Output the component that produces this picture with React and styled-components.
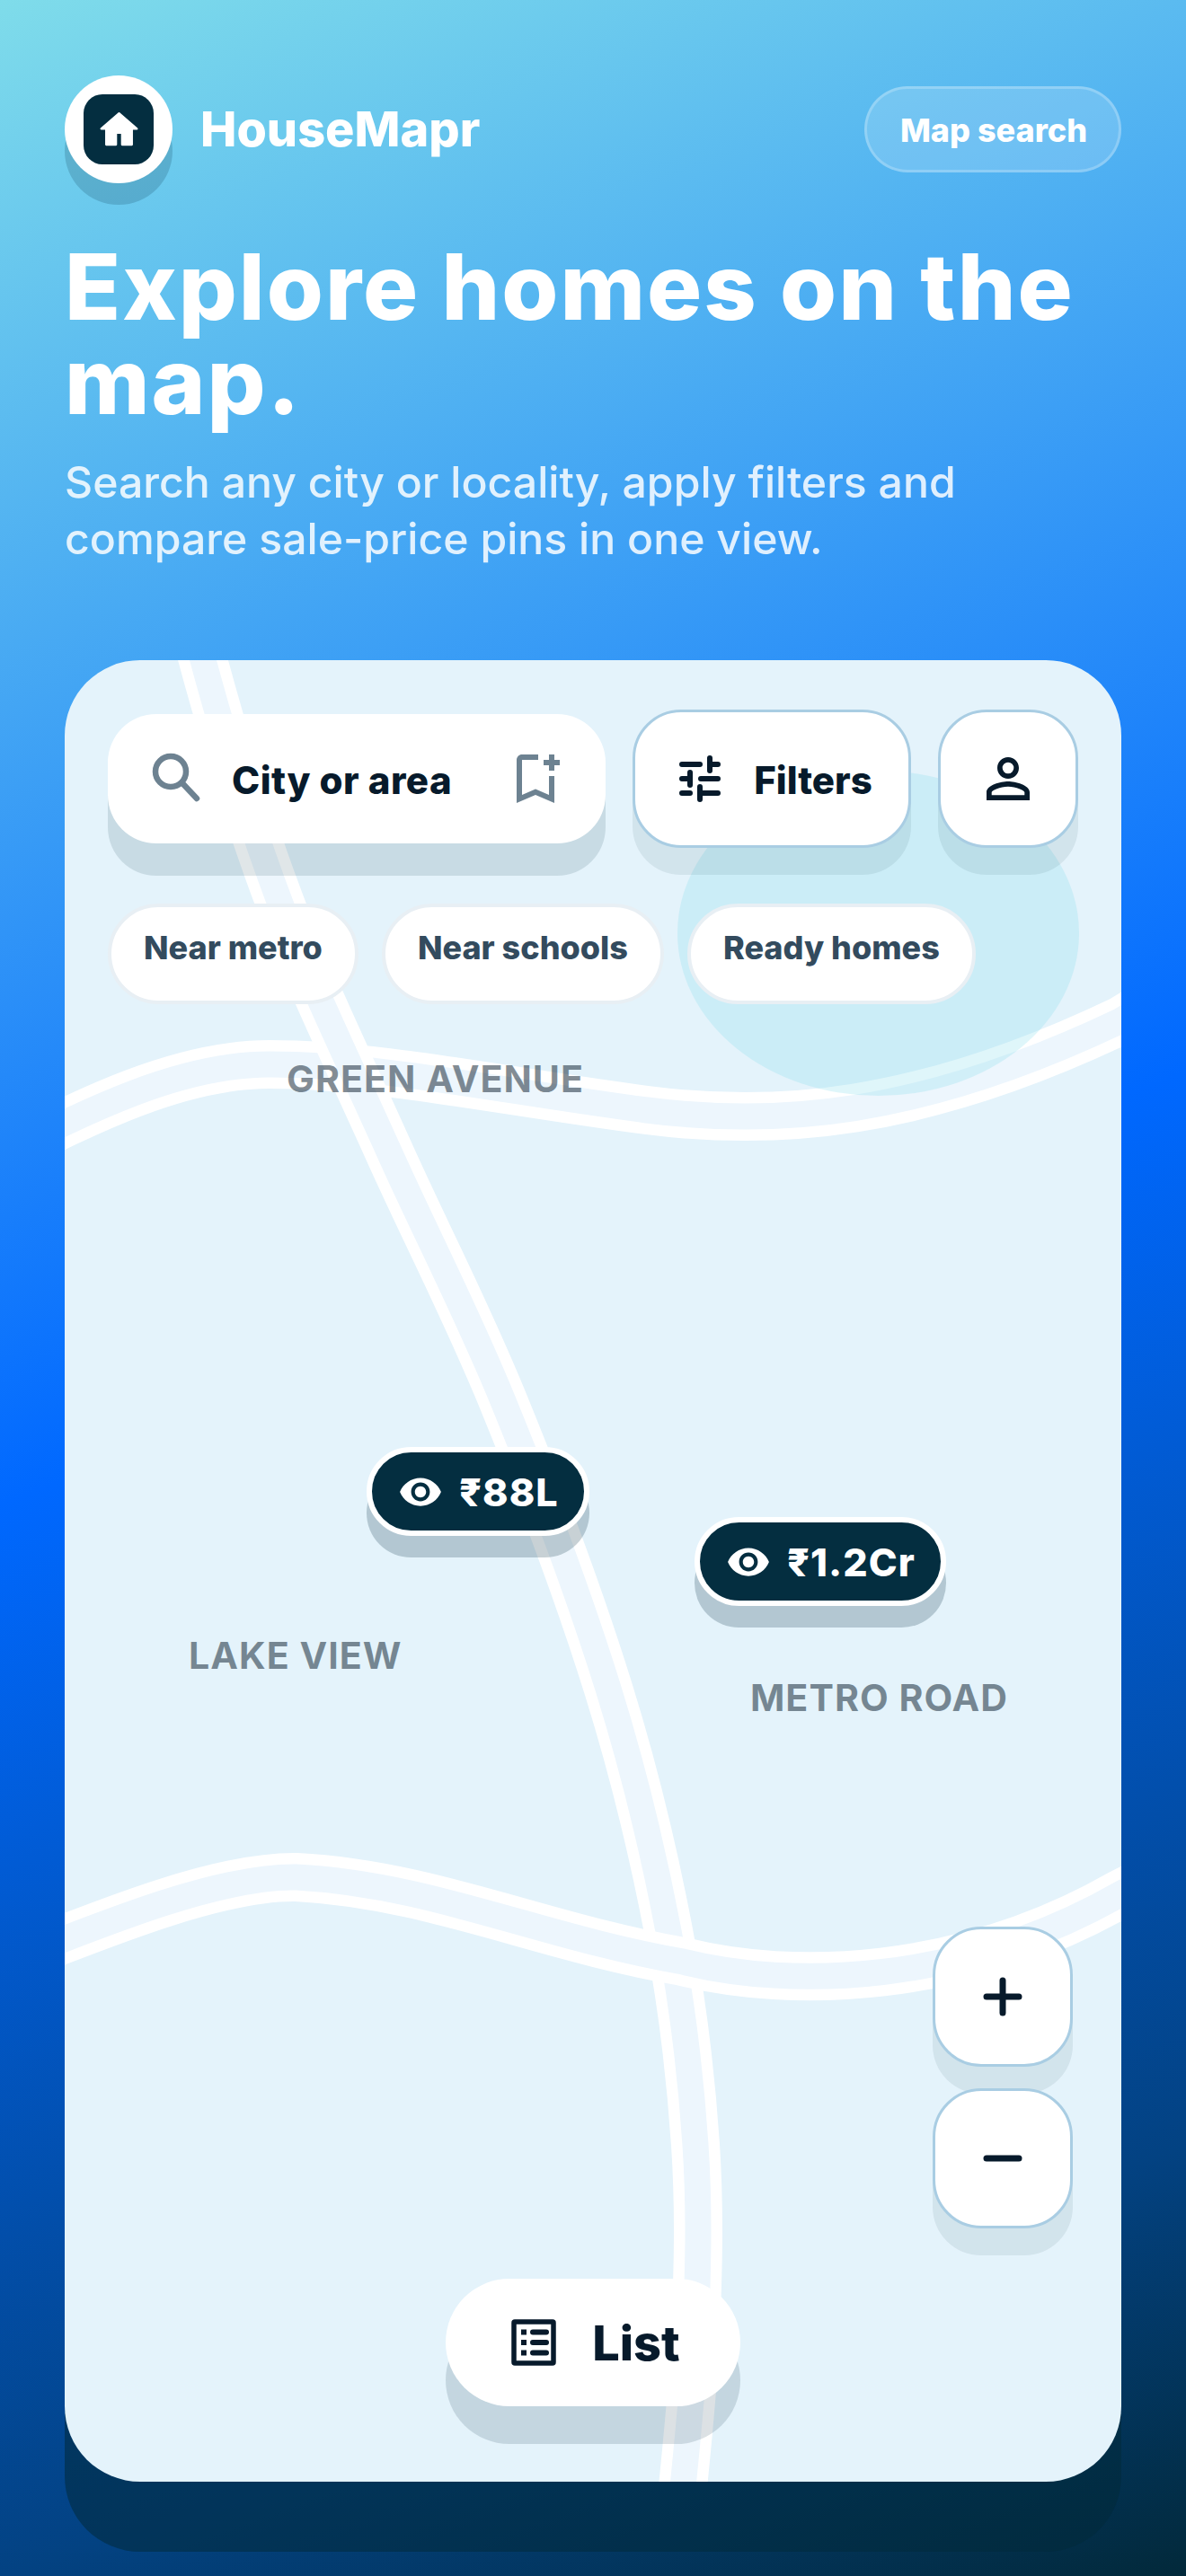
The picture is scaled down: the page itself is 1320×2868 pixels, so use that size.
import React from "react";
import styled, { createGlobalStyle } from "styled-components";
import { MdOutlineBookmarkAdd, MdPersonOutline, MdVisibility } from "react-icons/md";

const Global = createGlobalStyle`
  html, body { margin: 0; padding: 0; }
  body { font-family: Inter, "Noto Sans", sans-serif; }
  * { box-sizing: border-box; }
`;

const Page = styled.div`
  width: 1320px;
  height: 2868px;
  padding: 84px 72px 0;
  overflow: hidden;
  background: linear-gradient(160deg, #7fdcea 0%, #0068ff 50%, #034282 85.7%, #02293a 100%);
`;

const Header = styled.header`
  display: flex;
  align-items: center;
  justify-content: space-between;
  height: 120px;
`;

const Brand = styled.div`
  display: flex;
  align-items: center;
  gap: 31px;
`;

const LogoDisc = styled.div`
  width: 120px;
  height: 120px;
  border-radius: 50%;
  background: #fff;
  box-shadow: 0 24px 0 rgba(3, 46, 64, 0.18);
  display: flex;
  align-items: center;
  justify-content: center;
`;

const LogoTile = styled.div`
  width: 78px;
  height: 78px;
  border-radius: 21px;
  background: #042e40;
  display: flex;
  align-items: center;
  justify-content: center;
`;

const BrandName = styled.span`
  color: #fff;
  font-size: 54px;
  font-weight: 800;
  line-height: 1;
`;

const GhostPill = styled.div`
  width: 286px;
  height: 96px;
  padding: 2px 0 0 2px;
  border-radius: 48px;
  border: 3px solid rgba(255, 255, 255, 0.22);
  background: rgba(255, 255, 255, 0.16);
  color: #fff;
  font-size: 36px;
  font-weight: 800;
  display: flex;
  align-items: center;
  justify-content: center;
`;

const Title = styled.h1`
  margin: 63px 0 0;
  color: #fff;
  font-size: 102px;
  line-height: 105px;
  font-weight: 800;
  letter-spacing: 2px;
`;

const Sub = styled.p`
  margin: 28px 0 0;
  color: rgba(255, 255, 255, 0.84);
  font-size: 48.2px;
  line-height: 63px;
  font-weight: 500;
`;

const MapCard = styled.section`
  position: relative;
  margin-top: 104px;
  width: 1176px;
  height: 2028px;
  padding: 55px 48px 0;
  border-radius: 84px;
  background: #e4f3fb;
  box-shadow: 0 78px 0 rgba(2, 42, 58, 0.55);
  overflow: hidden;
`;

const Roads = styled.svg`
  position: absolute;
  inset: 0;
  width: 100%;
  height: 100%;
`;

const Glow = styled.div`
  position: absolute;
  left: 682px;
  top: 123px;
  width: 447px;
  height: 362px;
  border-radius: 50%;
  background: rgba(132, 220, 235, 0.26);
`;

const PlaceLabel = styled.span`
  position: absolute;
  left: ${(p) => p.$x}px;
  top: ${(p) => p.$y}px;
  color: rgba(7, 25, 42, 0.5);
  font-size: 41.2px;
  line-height: 50px;
  font-weight: 700;
  letter-spacing: 1px;
  white-space: nowrap;
`;

const TopRow = styled.div`
  position: relative;
  display: flex;
  align-items: center;
  gap: 30px;
`;

const Search = styled.div`
  flex: 1;
  height: 144px;
  border-radius: 54px;
  background: #fff;
  box-shadow: 0 36px 0 rgba(4, 46, 64, 0.12);
  display: flex;
  align-items: center;
  gap: 32px;
  padding: 0 42px 0 34px;
  color: #6d8291;
`;

const SearchText = styled.span`
  flex: 1;
  padding-top: 3px;
  color: #071a2b;
  font-size: 42px;
  font-weight: 800;
  letter-spacing: 0.45px;
`;

const RaisedButton = styled.div`
  height: ${(p) => p.$h || 154}px;
  width: ${(p) => p.$w}px;
  border-radius: 54px;
  border: 3px solid #a9cde3;
  background: #fff;
  box-shadow: 0 30px 0 rgba(4, 46, 64, 0.08);
  color: #071a2b;
  display: flex;
  align-items: center;
  justify-content: center;
  gap: 20px;
  font-size: 42px;
  font-weight: 800;
`;

const ButtonLabel = styled.span`
  padding-top: 3px;
`;

const Chips = styled.div`
  position: relative;
  display: flex;
  gap: 26px;
  margin-top: 62px;
`;

const Chip = styled.div`
  height: 112px;
  padding: 22px 36px 0;
  border-radius: 56px;
  border: 4px solid #e8eff4;
  background: #fff;
  color: #334b5e;
  font-size: 36px;
  line-height: 46px;
  font-weight: 800;
  white-space: nowrap;
`;

const Pin = styled.div`
  position: absolute;
  left: ${(p) => p.$x}px;
  top: ${(p) => p.$y}px;
  height: 99px;
  display: flex;
  align-items: center;
  gap: 18px;
  padding: 0 28px 0 29px;
  border-radius: 50px;
  border: 6px solid #fff;
  background: #042e40;
  box-shadow: 0 24px 0 rgba(4, 46, 64, 0.22);
  color: #fff;
  font-size: 43px;
  font-weight: 800;
  letter-spacing: 1px;
  white-space: nowrap;
`;

const ZoomStack = styled.div`
  position: absolute;
  right: 54px;
  top: 1410px;
  display: flex;
  flex-direction: column;
  gap: 24px;
`;

const ListButton = styled.div`
  position: absolute;
  left: 424px;
  top: 1802px;
  width: 328px;
  height: 142px;
  padding-left: 6px;
  border-radius: 71px;
  background: #fff;
  box-shadow: 0 42px 0 rgba(4, 46, 64, 0.14);
  color: #071a2b;
  font-size: 54px;
  font-weight: 800;
  display: flex;
  align-items: center;
  justify-content: center;
  gap: 40px;
`;

/* Smooth line through the given map points (Catmull-Rom to Bézier). */
const smooth = (pts) => {
  let d = `M${pts[0][0]} ${pts[0][1]}`;
  for (let i = 0; i < pts.length - 1; i++) {
    const p0 = pts[i - 1] || pts[i];
    const p1 = pts[i];
    const p2 = pts[i + 1];
    const p3 = pts[i + 2] || p2;
    const c1 = [p1[0] + (p2[0] - p0[0]) / 6, p1[1] + (p2[1] - p0[1]) / 6];
    const c2 = [p2[0] - (p3[0] - p1[0]) / 6, p2[1] - (p3[1] - p1[1]) / 6];
    d += `C${c1[0]} ${c1[1]} ${c2[0]} ${c2[1]} ${p2[0]} ${p2[1]}`;
  }
  return d;
};

const upperRoad = "M-100 1335C40 1270 170 1185 300 1185C420 1185 560 1215 720 1236C860 1254 1020 1245 1248 1136L1340 1080";
const crossRoad = smooth([[170, 480], [226, 735], [312, 1006], [432, 1280], [560, 1560], [677, 1880], [744, 2150], [774, 2388], [774, 2600], [757, 2800]]);
const lowerRoad = "M-100 2225C40 2175 220 2088 330 2090C480 2098 600 2156 760 2184C880 2214 1070 2210 1248 2108L1400 2030";

const Road = ({ d }) => (
  <>
    <path d={d} fill="none" stroke="#fff" strokeWidth="54" />
    <path d={d} fill="none" stroke="#edf6fd" strokeWidth="29" />
  </>
);

const HomeIcon = () => (
  <svg width="53" height="53" viewBox="0 0 24 24" fill="#fff" stroke="#fff" strokeWidth="1" strokeLinejoin="round">
    <path d="M10.5 19.5v-6h3v6h5v-8h2.5L12 3.7 3 11.5h2.5v8z" />
  </svg>
);

const SearchIcon = () => (
  <svg width="72" height="72" viewBox="0 0 72 72" fill="none" stroke="currentColor" strokeWidth="6.5" strokeLinecap="round">
    <circle cx="36" cy="28" r="17" />
    <line x1="49" y1="41" x2="65" y2="58" />
  </svg>
);

const TuneIcon = () => (
  <svg width="72" height="72" viewBox="0 0 72 72" fill="none" stroke="currentColor" strokeWidth="6" strokeLinecap="round">
    <path d="M12 20h20M43 13v14M43 20h9M12 36h7M21 29v14M33 36h19M12 52h9M32 45v14M32 52h20" />
  </svg>
);

const ListIcon = () => (
  <svg width="50" height="52" viewBox="0 0 50 52" fill="none" stroke="currentColor">
    <rect x="3" y="3" width="44" height="46" rx="1" strokeWidth="5.5" />
    <path d="M11 14.5h6M11 26h6M11 37.5h6" strokeWidth="6" />
    <path d="M24 14.5h15M24 26h15M24 37.5h15" strokeWidth="6" strokeLinecap="round" />
  </svg>
);

const PlusIcon = () => (
  <svg width="48" height="48" viewBox="0 0 48 48" fill="none" stroke="currentColor" strokeWidth="7" strokeLinecap="round">
    <path d="M6 24h36M24 6v36" />
  </svg>
);

const MinusIcon = () => (
  <svg width="48" height="48" viewBox="0 0 48 48" fill="none" stroke="currentColor" strokeWidth="7" strokeLinecap="round">
    <path d="M6 24h36" />
  </svg>
);

export default function App() {
  return (
    <Page>
      <Global />
      <Header>
        <Brand>
          <LogoDisc>
            <LogoTile>
              <HomeIcon />
            </LogoTile>
          </LogoDisc>
          <BrandName>HouseMapr</BrandName>
        </Brand>
        <GhostPill>Map search</GhostPill>
      </Header>
      <Title>Explore homes on the map.</Title>
      <Sub>
        Search any city or locality, apply filters and
        <br />
        compare sale-price pins in one view.
      </Sub>
      <MapCard>
        <Roads viewBox="72 735 1176 2028">
          <Road d={upperRoad} />
          <Road d={crossRoad} />
          <Road d={lowerRoad} />
        </Roads>
        <Glow />
        <PlaceLabel $x={247} $y={441}>GREEN AVENUE</PlaceLabel>
        <PlaceLabel $x={138} $y={1083}>LAKE VIEW</PlaceLabel>
        <PlaceLabel $x={763} $y={1130}>METRO ROAD</PlaceLabel>
        <TopRow>
          <Search>
            <SearchIcon />
            <SearchText>City or area</SearchText>
            <MdOutlineBookmarkAdd size={72} />
          </Search>
          <RaisedButton $w={310}>
            <TuneIcon />
            <ButtonLabel>Filters</ButtonLabel>
          </RaisedButton>
          <RaisedButton $w={156}>
            <MdPersonOutline size={72} />
          </RaisedButton>
        </TopRow>
        <Chips>
          <Chip>Near metro</Chip>
          <Chip>Near schools</Chip>
          <Chip>Ready homes</Chip>
        </Chips>
        <Pin $x={336} $y={876}>
          <MdVisibility size={50} />
          ₹88L
        </Pin>
        <Pin $x={701} $y={954}>
          <MdVisibility size={50} />
          ₹1.2Cr
        </Pin>
        <ZoomStack>
          <RaisedButton $w={156} $h={156}>
            <PlusIcon />
          </RaisedButton>
          <RaisedButton $w={156} $h={156}>
            <MinusIcon />
          </RaisedButton>
        </ZoomStack>
        <ListButton>
          <ListIcon />
          List
        </ListButton>
      </MapCard>
    </Page>
  );
}
